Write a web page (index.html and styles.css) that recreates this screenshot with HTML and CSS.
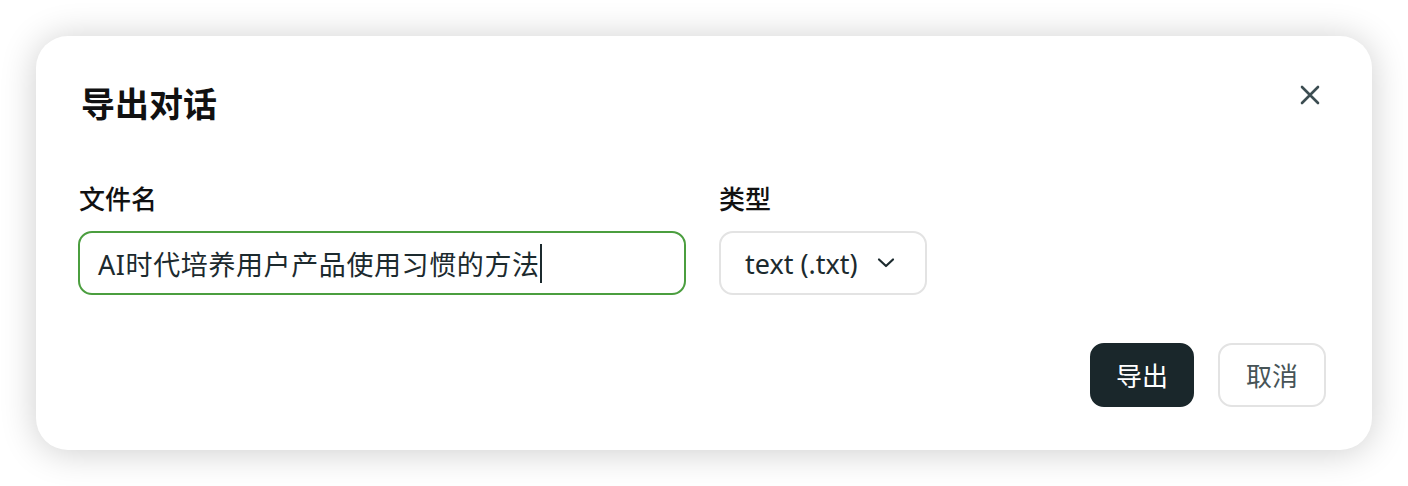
FILE: index.html
```html
<!doctype html>
<html lang="zh-CN">
<head>
  <meta charset="utf-8">
  <title>导出对话</title>
  <link rel="stylesheet" href="styles.css">
</head>
<body>
  <div class="dialog">
    <div class="dialog-header">
      <h2 class="dialog-title">导出对话</h2>
      <button type="button" class="close-btn" aria-label="关闭">
        <svg width="20" height="20" viewBox="0 0 20 20" fill="none" stroke="currentColor" stroke-width="2.6" stroke-linecap="round">
          <path d="M2 2 L18 18 M18 2 L2 18"/>
        </svg>
      </button>
    </div>
    <div class="fields">
      <div class="field-group name-group">
        <label class="field-label">文件名</label>
        <div class="text-field">AI时代培养用户产品使用习惯的方法<span class="caret"></span></div>
      </div>
      <div class="field-group type-group">
        <label class="field-label">类型</label>
        <div class="select-field">
          <span>text (.txt)</span>
          <svg width="20" height="12" viewBox="0 0 20 12" fill="none" stroke="currentColor" stroke-width="2.2" stroke-linecap="round" stroke-linejoin="round">
            <path d="M3 2.5 L10 9 L17 2.5"/>
          </svg>
        </div>
      </div>
    </div>
    <div class="dialog-footer">
      <button type="button" class="btn btn-primary">导出</button>
      <button type="button" class="btn btn-secondary">取消</button>
    </div>
  </div>
</body>
</html>
```
FILE: styles.css
```css
body {
  margin: 0;
  background: #fff;
  font-family: "Noto Sans", "Noto Sans CJK SC", sans-serif;
}
.dialog {
  margin: 36px;
  height: 414px;
  box-sizing: border-box;
  padding: 44px 46px 43px 43px;
  background: #fff;
  border-radius: 32px;
  box-shadow: 0 2px 36px rgba(0, 0, 0, 0.2);
  display: flex;
  flex-direction: column;
}
.dialog-header {
  display: flex;
  justify-content: space-between;
  align-items: flex-start;
}
.dialog-title {
  margin: 0 0 0 2px;
  font-size: 34px;
  line-height: 48px;
  font-weight: 700;
  color: #111;
}
.close-btn {
  width: 32px;
  height: 32px;
  margin-top: -1px;
  padding: 0;
  border: none;
  background: none;
  color: #3c4d52;
  display: flex;
  align-items: center;
  justify-content: center;
}
.fields {
  display: flex;
  gap: 33px;
  margin-top: 53px;
}
.field-group {
  display: flex;
  flex-direction: column;
}
.field-label {
  font-size: 26px;
  line-height: 36px;
  font-weight: 500;
  color: #111;
  margin-bottom: 14px;
}
.text-field {
  width: 608px;
  height: 64px;
  box-sizing: border-box;
  border: 2px solid #4b9e3f;
  border-radius: 14px;
  padding: 0 18px;
  display: flex;
  align-items: center;
  font-size: 27px;
  letter-spacing: 0.6px;
  color: #1c2a2e;
  margin-left: -1px;
}
.caret {
  display: inline-block;
  width: 2px;
  height: 39px;
  background: #1c2a2e;
}
.select-field {
  width: 208px;
  height: 64px;
  box-sizing: border-box;
  border: 2px solid #e3e3e3;
  border-radius: 14px;
  padding: 0 29px 0 24px;
  display: flex;
  align-items: center;
  justify-content: space-between;
  font-size: 27px;
  color: #1c2a2e;
}
.dialog-footer {
  margin-top: auto;
  display: flex;
  justify-content: flex-end;
  gap: 24px;
}
.btn {
  height: 64px;
  box-sizing: border-box;
  padding: 0 24px;
  border-radius: 14px;
  font-family: inherit;
  font-size: 26px;
}
.btn-primary {
  background: #1a272b;
  color: #fff;
  border: 2px solid #1a272b;
}
.btn-secondary {
  background: #fff;
  color: #475457;
  border: 2px solid #e3e3e3;
  padding: 0 26px;
}
```
